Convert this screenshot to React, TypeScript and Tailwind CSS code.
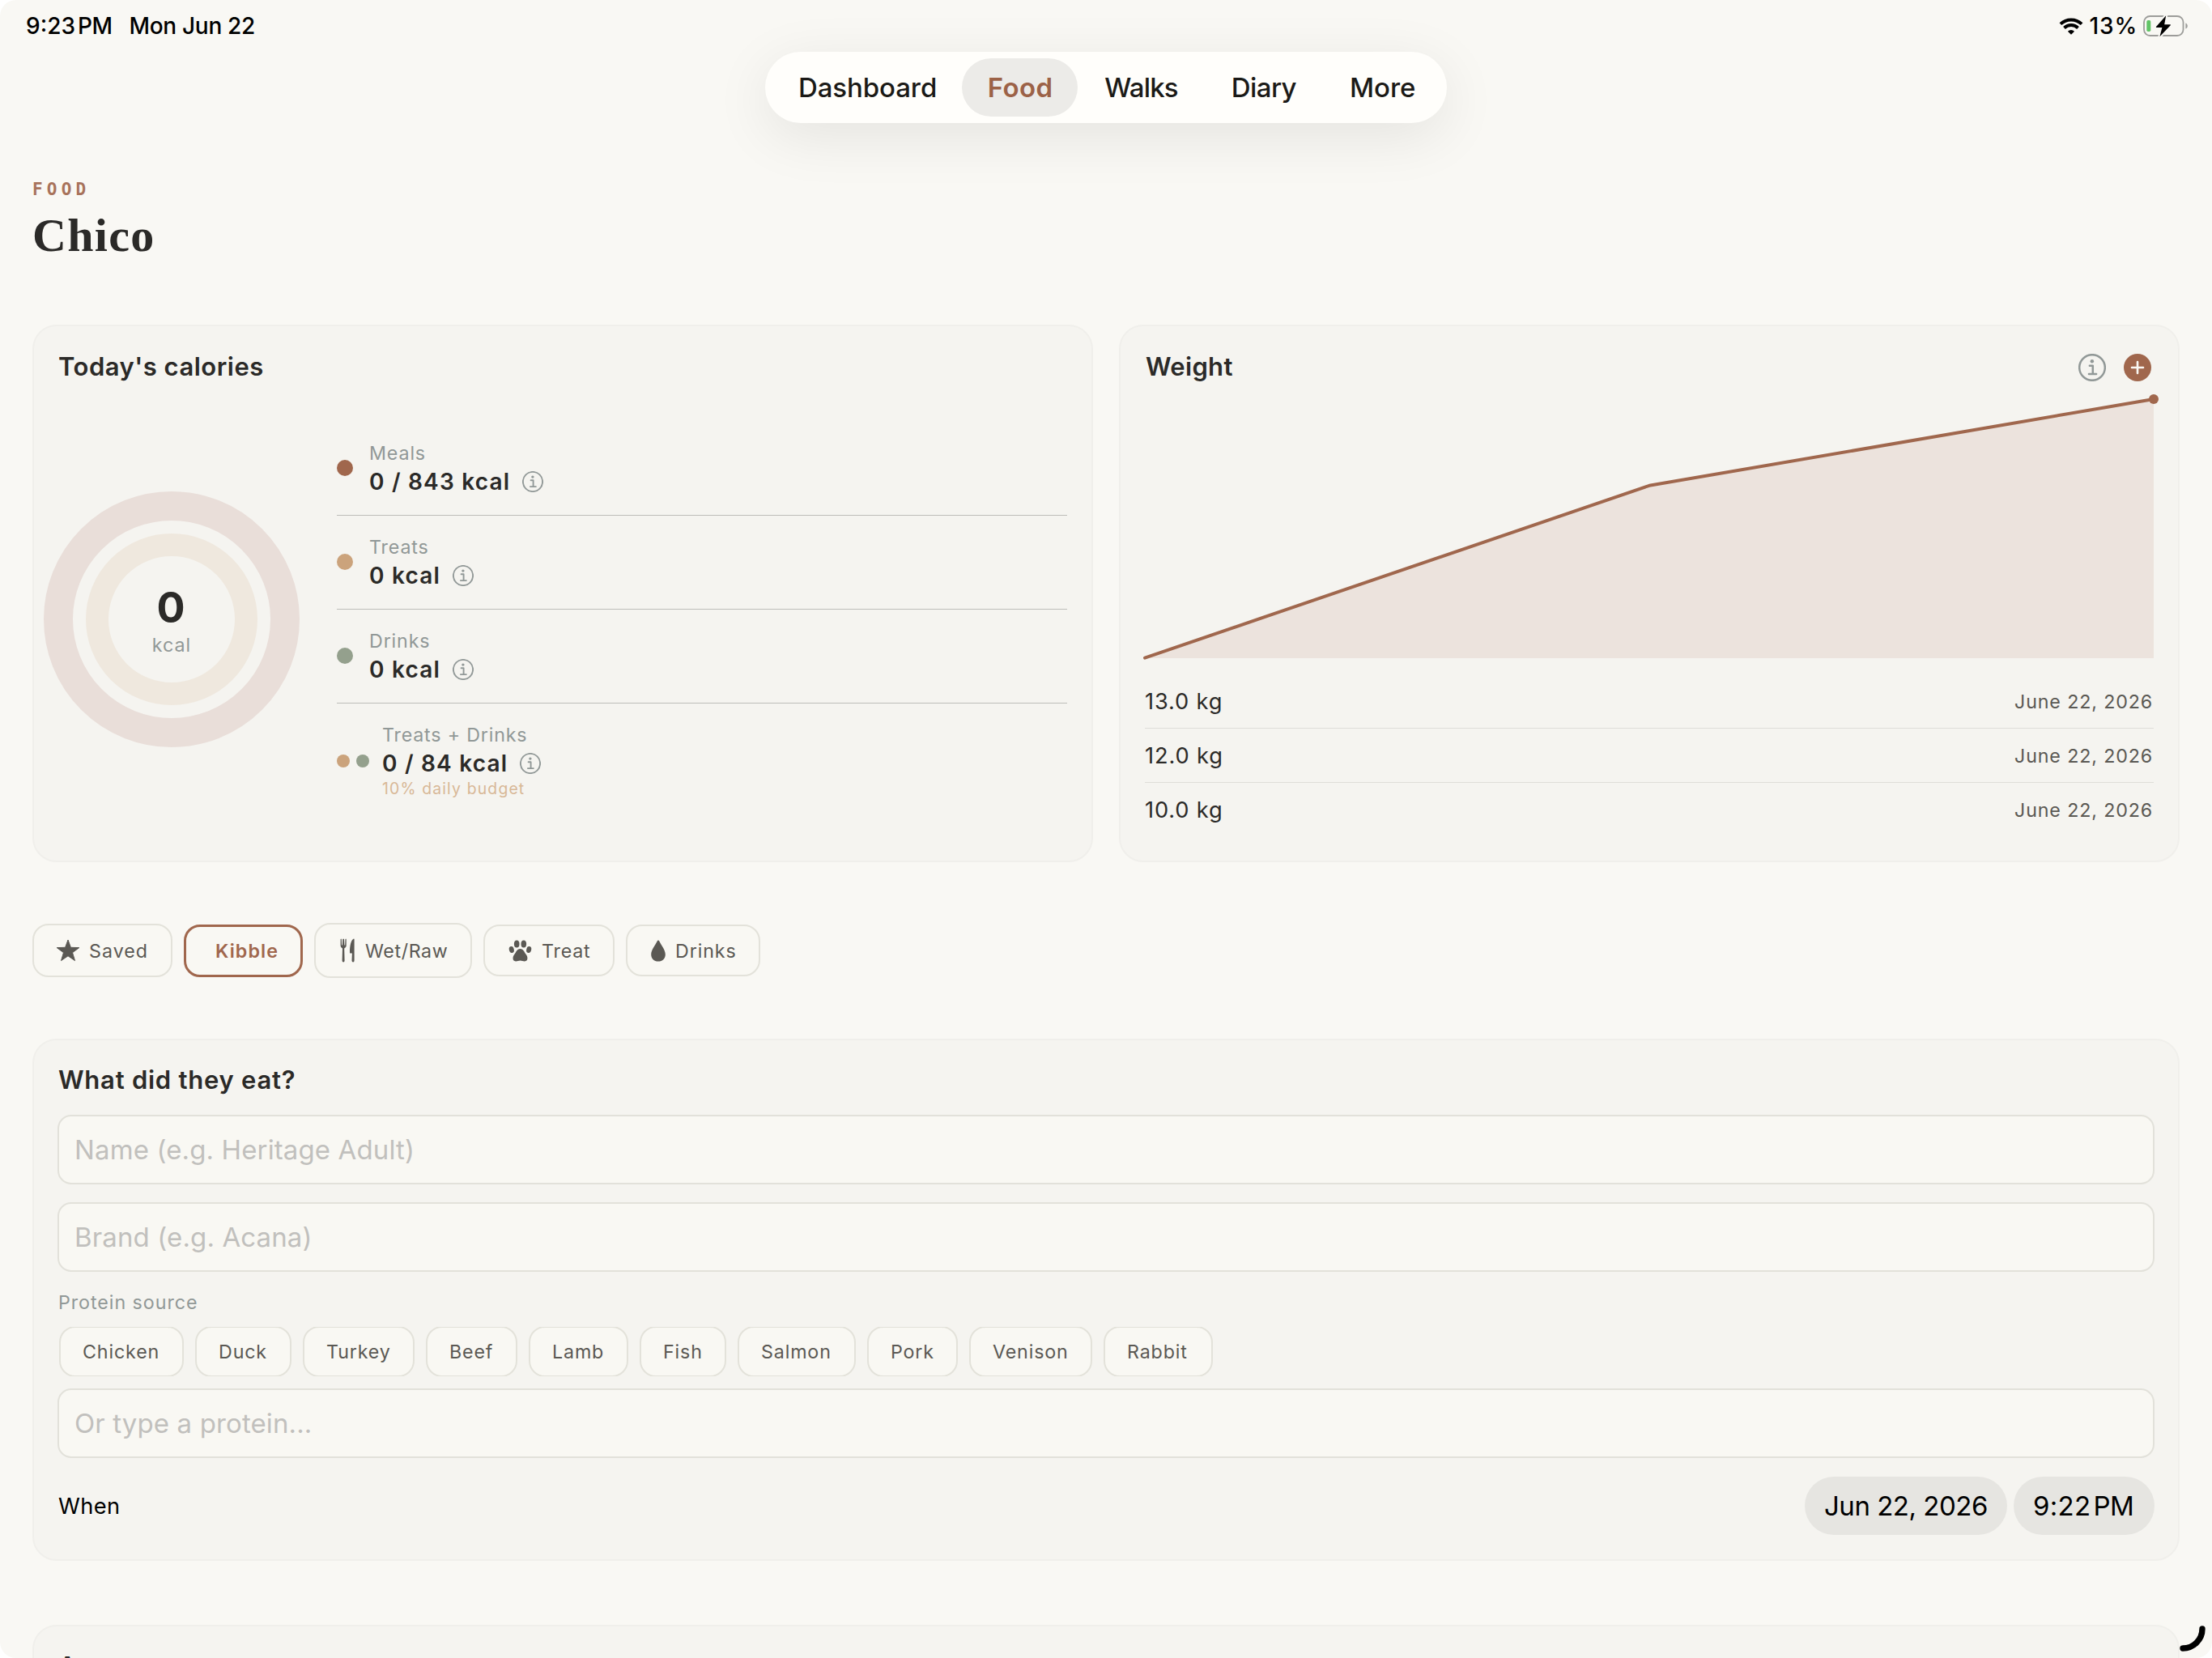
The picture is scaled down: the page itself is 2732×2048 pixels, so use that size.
import React from 'react';

const tabs = [
    { label: 'Dashboard', className: 'pl-[33px] pr-[31px] tracking-[-0.1px] font-medium text-[#1b1a17]' },
    { label: 'Food', className: 'w-[143px] pl-px text-center tracking-[0.4px] font-semibold text-[#9c6247] bg-[#ecebe8]' },
    { label: 'Walks', className: 'pl-[33px] pr-[33px] tracking-[-0.8px] font-medium text-[#1b1a17]' },
    { label: 'Diary', className: 'pl-[33px] pr-[33px] tracking-[-0.6px] font-medium text-[#1b1a17]' },
    { label: 'More', className: 'pl-[33px] tracking-[-0.05px] font-medium text-[#1b1a17]' },
];

const calories = [
    { label: 'Meals', value: '0 / 843 kcal', dot: 'bg-[#a0674d]' },
    { label: 'Treats', value: '0 kcal', dot: 'bg-[#cba37c]' },
    { label: 'Drinks', value: '0 kcal', dot: 'bg-[#94a08d]' },
];

const weights = [
    { value: '13.0 kg', date: 'June 22, 2026' },
    { value: '12.0 kg', date: 'June 22, 2026' },
    { value: '10.0 kg', date: 'June 22, 2026' },
];

const proteins = [
    { name: 'Chicken', width: 'w-[154px]' },
    { name: 'Duck', width: 'w-[119px]' },
    { name: 'Turkey', width: 'w-[138px]' },
    { name: 'Beef', width: 'w-[113px]' },
    { name: 'Lamb', width: 'w-[123px]' },
    { name: 'Fish', width: 'w-[107px]' },
    { name: 'Salmon', width: 'w-[146px]' },
    { name: 'Pork', width: 'w-[112px]' },
    { name: 'Venison', width: 'w-[152px]' },
    { name: 'Rabbit', width: 'w-[135px]' },
];

const Card = ({ className = '', children }: { className?: string; children: React.ReactNode }) => (
    <section className={`rounded-[30px] border-2 border-[#f0efeb] bg-[#f5f4f0] ${className}`}>{children}</section>
);

const CardTitle = ({ className = 'tracking-[0.5px]', children }: { className?: string; children: React.ReactNode }) => (
    <h2 className={`pl-px text-[31px] leading-[40px] font-semibold text-[#2b2a28] ${className}`}>{children}</h2>
);

const InfoIcon = ({ className }: { className: string }) => (
    <svg viewBox="0 0 26 26" fill="none" stroke="#919897" className={className}>
        <circle cx="13" cy="13" r="12.1" strokeWidth="1.9" />
        <circle cx="12.9" cy="7.1" r="1.7" fill="#919897" stroke="none" />
        <path d="M10.6 11.2H13.6V19M9.9 19.1H16.9" strokeWidth="1.9" strokeLinecap="round" strokeLinejoin="round" />
    </svg>
);

const StatusBar = () => (
    <div className="flex h-16 items-center justify-between pl-8 pr-[29px] text-[28px] leading-none font-medium text-black">
        <div className="flex">
            <span>9:23</span>
            <span className="ml-[3px] tracking-[-0.5px]">PM</span>
            <span className="ml-[21px] tracking-[-0.3px]">Mon Jun 22</span>
        </div>
        <div className="flex items-center">
            <svg viewBox="0 0 30 21" className="h-[21px] w-[30px]" fill="none" stroke="#000">
                <path d="M1.9 7.7A19 19 0 0 1 28.1 7.7" strokeWidth="3.9" />
                <path d="M6.5 12.5A12.2 12.2 0 0 1 23.5 12.5" strokeWidth="3.9" />
                <path d="M15 20.7L10.9 16.7A5.9 5.9 0 0 1 19.1 16.7Z" fill="#000" stroke="none" />
            </svg>
            <span className="ml-2 tracking-[0.8px]">13%</span>
            <svg viewBox="0 0 56 28" className="ml-[7px] h-7 w-14" fill="none">
                <rect x="1" y="2" width="48.5" height="24" rx="7.5" stroke="#9c9c99" strokeWidth="1.8" />
                <path d="M52.4 10.4C55.6 11.6 55.6 16.4 52.4 17.6Z" fill="#9c9c99" />
                <rect x="4.3" y="7" width="5" height="14" rx="1.8" fill="#61c466" />
                <path
                    d="M28.2 1.2L16 15Q15.3 16 16.6 16H23.4L20.4 27.2L33.8 13.2Q34.4 12.2 33.2 12.2H26.2Z"
                    fill="#000"
                    stroke="#f9f8f4"
                    strokeWidth="4"
                    paintOrder="stroke"
                    strokeLinejoin="round"
                />
            </svg>
        </div>
    </div>
);

const TabBar = () => (
    <nav className="mx-auto flex h-[88px] w-[842px] items-center rounded-full bg-[#fffefb] px-2 shadow-[0_16px_70px_rgba(0,0,0,0.085)]">
        {tabs.map((tab) => (
            <div key={tab.label} className={`h-[72px] shrink-0 rounded-full text-[33px] leading-[72px] ${tab.className}`}>
                {tab.label}
            </div>
        ))}
    </nav>
);

const CaloriesCard = () => (
    <Card className="h-[664px] pt-[30px]">
        <div className="pl-[29px]">
            <CardTitle>Today's calories</CardTitle>
        </div>
        <div className="flex items-start pl-3 pr-[30px]">
            <div className="relative mt-[134px] h-[316px] w-[316px] shrink-0">
                <svg viewBox="0 0 316 316" className="h-full w-full" fill="none">
                    <circle cx="158" cy="158" r="140" stroke="#e9ded9" strokeWidth="36" />
                    <circle cx="158" cy="158" r="92" stroke="#efe8de" strokeWidth="28" />
                </svg>
                <div className="absolute inset-0 flex flex-col items-center justify-center pt-[6px]">
                    <span className="pr-0.5 text-[52px] leading-[58px] font-bold text-[#2b2a28]">0</span>
                    <span className="text-[23.25px] leading-[34px] tracking-[1px] text-[#919897]">kcal</span>
                </div>
            </div>
            <div className="mt-12 ml-[46px] flex-1">
                {calories.map((item) => (
                    <div key={item.label} className="flex h-[116px] items-center border-b border-[#bdbdb9] pb-0.5">
                        <span className={`h-5 w-5 rounded-full ${item.dot}`} />
                        <div className="ml-[19px]">
                            <div className="pl-px text-[23.25px] leading-[34px] tracking-[0.85px] text-[#919897]">{item.label}</div>
                            <div className="flex items-center pl-px text-[28px] leading-[36px] font-semibold tracking-[1.2px] text-[#2b2a28]">
                                {item.value}
                                <InfoIcon className="ml-[15px] h-[26px] w-[26px]" />
                            </div>
                        </div>
                    </div>
                ))}
                <div className="flex h-[141px] items-center">
                    <span className="h-4 w-4 rounded-full bg-[#cba37c]" />
                    <span className="ml-2 h-4 w-4 rounded-full bg-[#94a08d]" />
                    <div className="ml-[15px]">
                        <div className="pl-px text-[23.25px] leading-[34px] tracking-[0.8px] text-[#919897]">Treats + Drinks</div>
                        <div className="flex items-center pl-px text-[28px] leading-[36px] font-semibold tracking-[1.2px] text-[#2b2a28]">
                            0 / 84 kcal
                            <InfoIcon className="ml-[15px] h-[26px] w-[26px]" />
                        </div>
                        <div className="pl-px text-[19.4px] leading-[27px] tracking-[1.15px] text-[#d8b897]">10% daily budget</div>
                    </div>
                </div>
            </div>
        </div>
    </Card>
);

const WeightCard = () => (
    <Card className="h-[664px] px-[30px] pt-[30px]">
        <div className="flex h-10 items-center justify-between pr-[3px]">
            <CardTitle className="tracking-[0.3px]">Weight</CardTitle>
            <div className="flex gap-[22px] pt-0.5">
                <InfoIcon className="h-[34px] w-[34px]" />
                <svg viewBox="0 0 34 34" className="h-[34px] w-[34px]">
                    <circle cx="17" cy="17" r="17" fill="#a0674d" />
                    <path d="M17 10V24M10 17H24" stroke="#f9f8f4" strokeWidth="2.6" strokeLinecap="round" />
                </svg>
            </div>
        </div>
        <svg viewBox="0 0 1246 330" className="mt-[11px] block h-[330px] w-full overflow-visible">
            <path d="M0 329L623 116L1246 9V329Z" fill="#ece3dd" />
            <path d="M0 328.6L623 115.8L1246 9" fill="none" stroke="#a0674d" strokeWidth="4" strokeLinecap="round" strokeLinejoin="round" />
            <circle cx="1246" cy="9" r="6" fill="#a0674d" />
        </svg>
        <div className="mt-[19px]">
            {weights.map((row) => (
                <div key={row.value} className="flex h-[67px] items-center justify-between border-b border-[#deddd8] pt-0.5 last:border-b-0">
                    <span className="text-[27.25px] tracking-[0.85px] text-[#2b2a28]">{row.value}</span>
                    <span className="pr-px text-[23.25px] tracking-[0.85px] text-[#5b5954]">{row.date}</span>
                </div>
            ))}
        </div>
    </Card>
);

const FoodTypes = () => (
    <div className="mt-[75px] flex h-[68px] items-center gap-[14px] text-[23.25px] text-[#5b5954]">
        <div className="flex h-[66px] w-[173px] items-center rounded-[20px] border-2 border-[#e3e2da] bg-[#f9f8f3] pl-[27px]">
            <svg viewBox="0 0 30 28" className="h-[28px] w-[30px]" fill="#5b5954">
                <path
                    d="M15 1L18.4 10.3L28.8 10.6L20.5 16.7L23.5 26.6L15 20.8L6.5 26.6L9.5 16.7L1.2 10.6L11.6 10.3Z"
                    stroke="#5b5954"
                    strokeLinejoin="round"
                />
            </svg>
            <span className="ml-[11px] pt-0.5 tracking-[1px]">Saved</span>
        </div>
        <div className="flex h-[65px] w-[147px] items-center rounded-[20px] border-[3px] border-[#a0674d] bg-[#f9f8f3] pl-9 font-semibold text-[#a0674d]">
            <span className="pt-0.5 tracking-[1.1px]">Kibble</span>
        </div>
        <div className="flex h-[68px] w-[195px] items-center rounded-[20px] border-2 border-[#e3e2da] bg-[#f9f8f3] pl-[29px]">
            <svg viewBox="0 0 20 30" className="h-[30px] w-[20px]" fill="#5b5954">
                <path d="M1.6 1.2V9.2Q1.7 11.6 4 12.6L3.6 27.4Q3.6 29.4 5.1 29.4T6.6 27.4L6.2 12.6Q8.6 11.6 8.7 9.2V1.2Q8.1 0 7.5 1.2L7.2 8.6H6.4L6 1.2Q5.1 0 4.3 1.2L3.9 8.6H3.1L2.8 1.2Q2.2 0 1.6 1.2Z" />
                <path d="M18.6 1.6V27.4Q18.6 29.4 17.1 29.4T15.5 27.4L15.9 18.6H14Q13 18.6 13 17.4C13 9 14.4 3 17.4 .8Q18.6 .2 18.6 1.6Z" />
            </svg>
            <span className="ml-3 pt-0.5 tracking-[0.6px]">Wet/Raw</span>
        </div>
        <div className="flex h-[64px] w-[162px] items-center rounded-[20px] border-2 border-[#e3e2da] bg-[#f9f8f3] pl-[29px]">
            <svg viewBox="0 0 29 27" className="h-[27px] w-[29px]" fill="#5b5954">
                <ellipse cx="10.2" cy="5" rx="3.3" ry="4.6" />
                <ellipse cx="18.8" cy="5" rx="3.3" ry="4.6" />
                <ellipse cx="3.8" cy="12" rx="3" ry="4.1" transform="rotate(-12 3.8 12)" />
                <ellipse cx="25.2" cy="12" rx="3" ry="4.1" transform="rotate(12 25.2 12)" />
                <path d="M14.5 11C18.6 11 19.6 15.2 21.6 17.8C24.2 20.8 24.4 26.4 20 26.4C17.8 26.4 16.6 25.6 14.5 25.6S11.2 26.4 9 26.4C4.6 26.4 4.8 20.8 7.4 17.8C9.4 15.2 10.4 11 14.5 11Z" />
            </svg>
            <span className="ml-3 pt-0.5 tracking-[0.8px]">Treat</span>
        </div>
        <div className="flex h-[64px] w-[166px] items-center rounded-[20px] border-2 border-[#e3e2da] bg-[#f9f8f3] pl-[29px]">
            <svg viewBox="0 0 18 27" className="h-[27px] w-[18px]" fill="#5b5954">
                <path d="M9 .6Q9.8 .6 10.4 1.8C12.6 6.6 17.8 12.2 17.8 18C17.8 23.2 14.2 26.6 9 26.6S.2 23.2 .2 18C.2 12.2 5.4 6.6 7.6 1.8Q8.2 .6 9 .6Z" />
            </svg>
            <span className="ml-3 pt-0.5 tracking-[0.9px]">Drinks</span>
        </div>
    </div>
);

const Field = ({ className = '', placeholder }: { className?: string; placeholder: string }) => (
    <div
        className={`flex h-[86px] items-center rounded-[17px] border-2 border-[#e2e1da] bg-[#f9f8f3] pt-0.5 pl-[19px] text-[33px] tracking-[0.12px] text-[#c1c0bd] ${className}`}
    >
        {placeholder}
    </div>
);

const MealForm = () => (
    <Card className="mt-[75px] px-[29px] pt-[29px] pb-[30px]">
        <CardTitle className="tracking-[0.75px]">What did they eat?</CardTitle>
        <Field className="mt-[23px]" placeholder="Name (e.g. Heritage Adult)" />
        <Field className="mt-[22px]" placeholder="Brand (e.g. Acana)" />
        <div className="mt-[21px] pl-px text-[23.25px] leading-[34px] tracking-[0.95px] text-[#919897]">Protein source</div>
        <div className="mt-[13px] flex h-[61px] items-center gap-[14px] overflow-hidden pl-[2px]">
            {proteins.map((protein) => (
                <div
                    key={protein.name}
                    className={`flex h-[63px] shrink-0 items-center rounded-[20px] border-2 border-[#e3e2da] bg-[#f9f8f3] pt-px pl-[27px] text-[23.25px] tracking-[0.85px] text-[#5b5954] ${protein.width}`}
                >
                    {protein.name}
                </div>
            ))}
        </div>
        <Field className="mt-[15px]" placeholder="Or type a protein..." />
        <div className="mt-[23px] flex h-[72px] items-center justify-between text-black">
            <span className="pt-0.5 pl-px text-[27.25px] tracking-[0.4px]">When</span>
            <div className="flex gap-2 text-[33px] leading-[72px]">
                <div className="w-[250px] rounded-full bg-[#e6e5e1] pl-6 tracking-[-0.48px]">Jun 22, 2026</div>
                <div className="flex w-[174px] rounded-full bg-[#e6e5e1] pl-6">
                    <span className="tracking-[0.3px]">9:22</span>
                    <span className="ml-[3px] tracking-[-0.5px]">PM</span>
                </div>
            </div>
        </div>
    </Card>
);

export default function App() {
    return (
        <div className="h-[2048px] w-[2732px] bg-white">
            <div className="relative h-full w-full overflow-hidden rounded-[20px] bg-[#f9f8f4] font-['Inter',sans-serif] whitespace-nowrap">
                <StatusBar />
                <TabBar />
                <main className="px-10">
                    <header className="pt-[67px]">
                        <div className="font-['DejaVu_Sans_Mono',monospace] text-[21px] leading-[31px] font-bold tracking-[5.2px] text-[#a8735b]">FOOD</div>
                        <h1 className="mt-[9px] font-['Liberation_Serif',serif] text-[58px] leading-[64px] font-bold tracking-[1.3px] text-[#2b2a28]">Chico</h1>
                    </header>
                    <div className="mt-[78px] grid grid-cols-2 gap-8">
                        <CaloriesCard />
                        <WeightCard />
                    </div>
                    <FoodTypes />
                    <MealForm />
                    <Card className="mt-[79px] h-[300px] px-[29px] pt-[29px]">
                        <CardTitle>Amount</CardTitle>
                    </Card>
                </main>

                {/* Corner handle */}
                <svg viewBox="0 0 40 40" className="absolute right-0 bottom-0 h-10 w-10" fill="none">
                    <path d="M4 28C17 28 28 17.5 28 4" stroke="#000" strokeWidth="7.4" strokeLinecap="round" />
                </svg>
            </div>
        </div>
    );
}
